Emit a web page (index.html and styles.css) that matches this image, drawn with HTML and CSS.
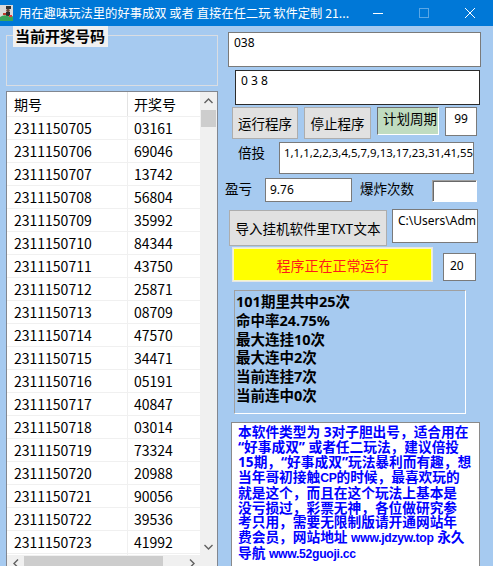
FILE: index.html
```html
<!DOCTYPE html>
<html lang="zh-CN">
<head>
<meta charset="utf-8">
<title>好事成双</title>
<link rel="stylesheet" href="styles.css">
</head>
<body>
<div class="window">
  <div class="titlebar">
    <svg class="appicon" width="14" height="18" viewBox="0 0 14 18">
      <rect x="0" y="1" width="13" height="16" fill="#d9d9d9"/>
      <rect x="6" y="2" width="5" height="3" fill="#333"/>
      <circle cx="8" cy="6.5" r="1.8" fill="#6b4a3a"/>
      <rect x="6" y="8" width="4" height="4" fill="#2d2d2d"/>
      <rect x="3" y="9" width="3" height="2" fill="#c0392b"/>
      <path d="M0 17 L0 13 Q4 10 8 12 Q11 13 13 12 L13 17 Z" fill="#3aa35a"/>
      <rect x="9" y="11" width="3" height="2" fill="#e23b3b"/>
    </svg>
    <div class="title">用在趣味玩法里的好事成双 或者 直接在任二玩 软件定制 21...</div>
    <div class="caption-buttons">
      <div class="cbtn"><svg width="10" height="10" viewBox="0 0 10 10"><path d="M0 5.5 H10" stroke="#fff" stroke-width="1"/></svg></div>
      <div class="cbtn"><svg width="10" height="10" viewBox="0 0 10 10"><rect x="0.5" y="0.5" width="9" height="9" fill="none" stroke="#5aa7e6" stroke-width="1"/></svg></div>
      <div class="cbtn"><svg width="10" height="10" viewBox="0 0 10 10"><path d="M0 0 L10 10 M10 0 L0 10" stroke="#fff" stroke-width="1"/></svg></div>
    </div>
  </div>

  <div class="main">
    <div class="leftcol">
      <div class="groupbox">
        <div class="grouplabel">当前开奖号码</div>
      </div>
      <div class="grid">
        <div class="grid-body">
          <div class="row head"><div class="c1 hc1">期号</div><div class="c2">开奖号</div></div>
          <div class="row"><div class="c1">2311150705</div><div class="c2">03161</div></div>
          <div class="row"><div class="c1">2311150706</div><div class="c2">69046</div></div>
          <div class="row"><div class="c1">2311150707</div><div class="c2">13742</div></div>
          <div class="row"><div class="c1">2311150708</div><div class="c2">56804</div></div>
          <div class="row"><div class="c1">2311150709</div><div class="c2">35992</div></div>
          <div class="row"><div class="c1">2311150710</div><div class="c2">84344</div></div>
          <div class="row"><div class="c1">2311150711</div><div class="c2">43750</div></div>
          <div class="row"><div class="c1">2311150712</div><div class="c2">25871</div></div>
          <div class="row"><div class="c1">2311150713</div><div class="c2">08709</div></div>
          <div class="row"><div class="c1">2311150714</div><div class="c2">47570</div></div>
          <div class="row"><div class="c1">2311150715</div><div class="c2">34471</div></div>
          <div class="row"><div class="c1">2311150716</div><div class="c2">05191</div></div>
          <div class="row"><div class="c1">2311150717</div><div class="c2">40847</div></div>
          <div class="row"><div class="c1">2311150718</div><div class="c2">03014</div></div>
          <div class="row"><div class="c1">2311150719</div><div class="c2">73324</div></div>
          <div class="row"><div class="c1">2311150720</div><div class="c2">20988</div></div>
          <div class="row"><div class="c1">2311150721</div><div class="c2">90056</div></div>
          <div class="row"><div class="c1">2311150722</div><div class="c2">39536</div></div>
          <div class="row"><div class="c1">2311150723</div><div class="c2">41992</div></div>
          <div class="row"><div class="c1"></div><div class="c2"></div></div>
        </div>
        <div class="vscroll">
          <div class="arrow"><svg width="9" height="6" viewBox="0 0 9 6"><path d="M0.5 5 L4.5 1 L8.5 5" fill="none" stroke="#606060" stroke-width="1.4"/></svg></div>
          <div class="vthumb"></div>
          <div class="spacer"></div>
          <div class="arrow"><svg width="9" height="6" viewBox="0 0 9 6"><path d="M0.5 1 L4.5 5 L8.5 1" fill="none" stroke="#606060" stroke-width="1.4"/></svg></div>
        </div>
        <div class="hscroll">
          <div class="harrow"><svg width="6" height="9" viewBox="0 0 6 9"><path d="M5 0.5 L1 4.5 L5 8.5" fill="none" stroke="#606060" stroke-width="1.4"/></svg></div>
          <div class="hthumb"></div>
          <div class="spacer"></div>
          <div class="harrow"><svg width="6" height="9" viewBox="0 0 6 9"><path d="M1 0.5 L5 4.5 L1 8.5" fill="none" stroke="#606060" stroke-width="1.4"/></svg></div>
        </div>
        <div class="corner"></div>
      </div>
    </div>

    <div class="rightcol">
      <div class="tb tb1">038</div>
      <div class="tb tb2">0 3 8</div>

      <div class="r r3">
        <div class="btn b-run">运行程序</div>
        <div class="btn b-stop">停止程序</div>
        <div class="plan">计划周期</div>
        <div class="tb tb99">99</div>
      </div>

      <div class="r r4">
        <div class="lbl l-bei">倍投</div>
        <div class="tb tb-bei">1,1,1,2,2,3,4,5,7,9,13,17,23,31,41,55,74</div>
      </div>

      <div class="r r5">
        <div class="lbl l-ying">盈亏</div>
        <div class="tb tb-ying">9.76</div>
        <div class="lbl l-bao">爆炸次数</div>
        <div class="tb3d tb-bao"></div>
      </div>

      <div class="r r6">
        <div class="btn b-import">导入挂机软件里TXT文本</div>
        <div class="tb tb-path">C:\Users\Adm</div>
      </div>

      <div class="r r7">
        <div class="status">程序正在正常运行</div>
        <div class="tb tb20">20</div>
      </div>

      <div class="stats">
        <div>101期里共中25次</div>
        <div>命中率24.75%</div>
        <div>最大连挂10次</div>
        <div>最大连中2次</div>
        <div>当前连挂7次</div>
        <div>当前连中0次</div>
      </div>

      <div class="info">本软件类型为 3对子胆出号，适合用在<br>“好事成双” 或者任二玩法，建议倍投<br>15期，“好事成双”玩法暴利而有趣，想<br>当年哥初接触<span class="lat">CP</span>的时候，最喜欢玩的<br>就是这个，而且在这个玩法上基本是<br>没亏损过，彩票无神，各位做研究参<br>考只用，需要无限制版请开通网站年<br>费会员，网站地址 <span class="lat">www.jdzyw.top</span> 永久<br>导航 <span class="lat">www.52guoji.cc</span></div>
    </div>
  </div>
</div>
</body>
</html>
```
FILE: styles.css
```css
* { box-sizing: border-box; }
html, body { margin: 0; padding: 0; }
body {
  width: 493px;
  height: 566px;
  overflow: hidden;
  background: #a6caf0;
  font-family: "Noto Sans CJK SC", "Noto Sans", sans-serif;
  color: #000;
}
.window { width: 493px; height: 566px; overflow: hidden; }

/* title bar */
.titlebar {
  height: 26px;
  background: #0078d7;
  display: flex;
  align-items: center;
  color: #fff;
}
.appicon { margin-left: 0; flex: none; }
.title {
  margin-left: 5px;
  font-size: 12.3px;
  white-space: nowrap;
  line-height: 26px;
}
.caption-buttons { margin-left: auto; display: flex; height: 26px; }
.cbtn {
  width: 46px;
  height: 26px;
  display: flex;
  align-items: center;
  justify-content: center;
}

/* layout */
.main { display: flex; align-items: flex-start; }
.leftcol { width: 225px; padding-left: 6px; flex: none; }
.rightcol { width: 268px; display: flex; flex-direction: column; flex: none; }

/* group box */
.groupbox {
  position: relative;
  margin-top: 9px;
  width: 212px;
  height: 51px;
  border: 1px solid #dadde2;
}
.grouplabel {
  position: absolute;
  left: 6px;
  top: -10px;
  width: 95px;
  height: 21px;
  background: #f0f0f0;
  font-size: 15px;
  font-weight: bold;
  line-height: 19px;
  padding-left: 2px;
  white-space: nowrap;
}

/* data grid */
.grid {
  margin-top: 5px;
  width: 212px;
  border: 1px solid #828790;
  background: #fff;
  display: grid;
  grid-template-columns: 193px 17px;
  grid-template-rows: 463px 17px;
}
.grid-body { overflow: hidden; font-size: 14px; }
.row {
  display: flex;
  height: 23px;
  border-bottom: 1px solid #f0f0f0;
  line-height: 22px;
  white-space: nowrap;
}
.row.head { height: 25px; line-height: 25px; }
.c1 { width: 121px; padding-left: 7px; border-right: 1px solid #f0f0f0; flex: none; }
.hc1 { border-right-color: #e3e3e3; }
.c2 { padding-left: 6px; flex: none; }

.vscroll {
  background: #f0f0f0;
  display: flex;
  flex-direction: column;
}
.arrow { height: 17px; display: flex; align-items: center; justify-content: center; flex: none; }
.vthumb { height: 17px; margin: 1px 1px 0; background: #cdcdcd; flex: none; }
.spacer { flex: 1; }
.hscroll { background: #f0f0f0; display: flex; }
.harrow { width: 17px; display: flex; align-items: center; justify-content: center; flex: none; }
.hthumb { width: 139px; margin: 1px 0; background: #cdcdcd; flex: none; }
.corner { background: #f0f0f0; }

/* right column controls */
.tb {
  background: #fff;
  border: 1px solid #7a7a7a;
  font-family: "Noto Sans", "Noto Sans CJK SC", sans-serif;
  font-size: 12px;
  line-height: 16px;
  padding: 3px 5px;
  white-space: nowrap;
  overflow: hidden;
  flex: none;
}
.tb3d {
  background: #fff;
  border-top: 1px solid #a0a0a0;
  border-left: 1px solid #a0a0a0;
  border-right: 1px solid #fff;
  border-bottom: 1px solid #fff;
  box-shadow: inset 1px 1px 0 #696969;
  flex: none;
}
.tb1 { margin: 6px 0 0 3px; width: 253px; height: 35px; padding-top: 2px; }
.tb2 { margin: 3px 0 0 10px; width: 245px; height: 35px; border-color: #2b2b2b; padding-top: 2px; }

.r { display: flex; align-items: flex-start; }
.r3 { margin-top: 2px; height: 32px; }
.btn {
  background: #e1e1e1;
  border: 1px solid #adadad;
  font-size: 13.5px;
  display: flex;
  align-items: center;
  justify-content: center;
  white-space: nowrap;
  flex: none;
}
.b-run { margin-left: 7px; width: 66px; height: 32px; }
.b-stop { margin-left: 6px; width: 67px; height: 32px; }
.plan {
  margin-left: 6px;
  width: 62px;
  height: 28px;
  background: #c0dcc0;
  border-top: 1px solid #6d6d6d;
  border-left: 1px solid #6d6d6d;
  border-right: 1px solid #fff;
  border-bottom: 1px solid #fff;
  font-size: 13.5px;
  line-height: 18px;
  padding: 1px 0 0 5px;
  white-space: nowrap;
  flex: none;
}
.tb99 { margin-left: 6px; width: 32px; height: 29px; text-align: center; padding: 3px 0; }

.lbl { font-size: 13.5px; white-space: nowrap; flex: none; }
.r4 { margin-top: 3px; height: 32px; }
.l-bei { margin-left: 13px; width: 41px; line-height: 20px; }
.tb-bei { width: 195px; height: 32px; padding: 2px 0 0 4px; font-size: 11.4px; }

.r5 { margin-top: 4px; height: 24px; }
.l-ying { width: 40px; line-height: 20px; }
.tb-ying { width: 87px; height: 24px; padding: 3px 0 0 4px; }
.l-bao { margin-left: 8px; width: 72px; line-height: 20px; }
.tb-bao { margin-top: 2px; width: 45px; height: 22px; }

.r6 { margin-top: 7px; height: 37px; }
.b-import { margin: 1px 0 0 4px; width: 158px; height: 36px; font-size: 13.5px; }
.tb-path { margin-left: 5px; width: 86px; height: 34px; padding: 3px 0 0 5px; }

.r7 { margin-top: 1px; height: 35px; }
.status {
  margin-left: 7px;
  width: 201px;
  height: 35px;
  background: #ffff00;
  border: 1px solid #e6e6e6;
  box-shadow: inset 0 0 0 1px #f7f7c8;
  color: #ff1a1a;
  font-size: 14px;
  display: flex;
  align-items: center;
  justify-content: center;
  white-space: nowrap;
  flex: none;
}
.tb20 { margin: 6px 0 0 10px; width: 33px; height: 28px; padding: 4px 0 0 6px; }

.stats {
  margin: 8px 0 0 9px;
  width: 232px;
  height: 124px;
  border-top: 1px solid #a0a0a0;
  border-left: 1px solid #a0a0a0;
  border-right: 1px solid #fff;
  border-bottom: 1px solid #fff;
  font-family: "Noto Sans", "Noto Sans CJK SC", sans-serif;
  font-size: 14.5px;
  font-weight: bold;
  line-height: 18.8px;
  padding: 1px 0 0 1px;
  white-space: nowrap;
}

.info {
  margin: 8px 0 0 6px;
  width: 249px;
  height: 150px;
  background: #fff;
  border: 1px solid #8a8a8a;
  color: #0000ff;
  font-family: "Noto Sans", "Noto Sans CJK SC", sans-serif;
  font-size: 13.7px;
  font-weight: bold;
  line-height: 14.9px;
  padding: 2px 0 0 6px;
  white-space: nowrap;
  overflow: hidden;
}
.lat {
  font-family: "Liberation Sans", "Noto Sans", sans-serif;
  font-size: 12.2px;
  letter-spacing: -0.3px;
}
```
